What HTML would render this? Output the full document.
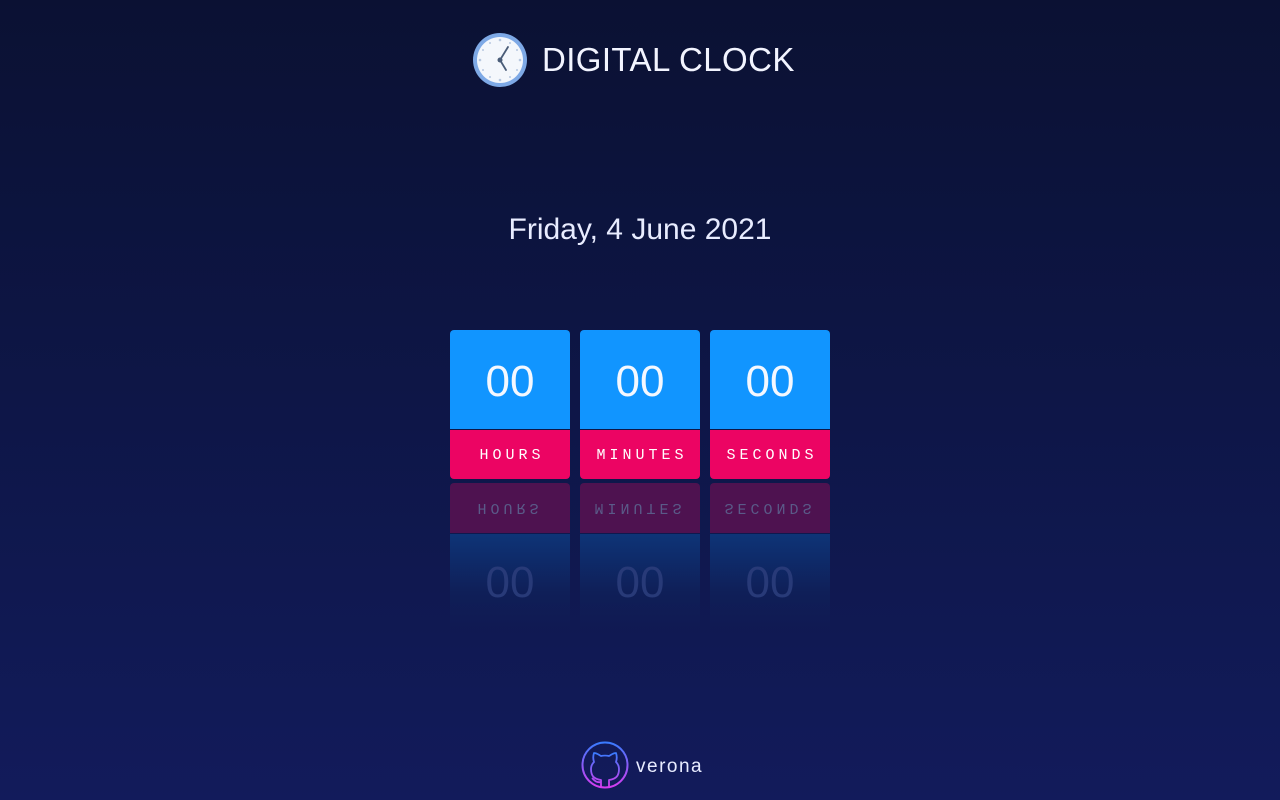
<!DOCTYPE html>
<html><head><style>
body{margin:0;width:1280px;height:800px;overflow:hidden;background:linear-gradient(#0b1133,#0d1543 40%,#121b5b);font-family:"Liberation Sans",sans-serif;color:#fff;position:relative}
.title{position:absolute;left:472px;top:32px;display:flex;align-items:center}
.title span{font-size:33px;margin-left:14px;letter-spacing:0.4px;color:#f2f4ff}
.date{position:absolute;top:213px;width:100%;text-align:center;font-size:30px;color:#e8ecff}
.card{position:absolute;top:330px;width:120px}
.num{height:99px;background:#1195ff;border-radius:4px 4px 0 0;text-align:center;line-height:104px;font-size:44px;color:#f4f8ff}
.lab{margin-top:1px;height:49px;background:#ec0463;border-radius:0 0 4px 4px;text-align:center;line-height:52px;font-family:"Liberation Mono",monospace;font-size:15px;letter-spacing:4px;padding-left:4px;box-sizing:border-box}
.ref{position:absolute;top:483px;width:120px}
.rlab{height:50px;background:#4e1250;border-radius:4px 4px 0 0;text-align:center;line-height:48px;font-family:"Liberation Mono",monospace;font-size:15px;letter-spacing:4px;color:#5a5a88}
.rlab div,.rnum div{transform:scaleY(-1)}
.rnum{margin-top:1px;height:97px;background:linear-gradient(#0e3477,#0f1f58 60%,rgba(16,26,85,0));text-align:center;line-height:95px;font-size:44px;color:#283a78}
.foot{position:absolute;left:581px;top:741px;display:flex;align-items:center}
.foot span{font-size:19px;margin-left:7px;color:#e8ecff;letter-spacing:1.5px;margin-top:4px}
</style></head><body>
<div class="title">
<svg width="56" height="56" viewBox="0 0 56 56"><circle cx="28" cy="28" r="27" fill="#7ea9e6"/><circle cx="28" cy="28" r="23" fill="#f4f7fc"/>
<g fill="#b8c8e0"><circle cx="28" cy="8" r="1.3"/><circle cx="28" cy="48" r="1.3"/><circle cx="8" cy="28" r="1.3"/><circle cx="48" cy="28" r="1.3"/><circle cx="38" cy="11" r="1"/><circle cx="45" cy="18" r="1"/><circle cx="45" cy="38" r="1"/><circle cx="38" cy="45" r="1"/><circle cx="18" cy="45" r="1"/><circle cx="11" cy="38" r="1"/><circle cx="11" cy="18" r="1"/><circle cx="18" cy="11" r="1"/></g>
<path d="M28 28 L36 15 M28 28 L34 38" stroke="#4a5c78" stroke-width="1.8" stroke-linecap="round"/><circle cx="28" cy="28" r="2.5" fill="#4a5c78"/></svg>
<span>DIGITAL CLOCK</span></div>
<div class="date">Friday, 4 June 2021</div>
<div class="card" style="left:450px"><div class="num">00</div><div class="lab">HOURS</div></div>
<div class="card" style="left:580px"><div class="num">00</div><div class="lab">MINUTES</div></div>
<div class="card" style="left:710px"><div class="num">00</div><div class="lab">SECONDS</div></div>
<div class="ref" style="left:450px"><div class="rlab"><div>HOURS</div></div><div class="rnum"><div>00</div></div></div>
<div class="ref" style="left:580px"><div class="rlab"><div>MINUTES</div></div><div class="rnum"><div>00</div></div></div>
<div class="ref" style="left:710px"><div class="rlab"><div>SECONDS</div></div><div class="rnum"><div>00</div></div></div>
<div class="foot">
<svg width="48" height="48" viewBox="0 0 48 48"><defs><linearGradient id="g" x1="0" y1="0" x2="0" y2="1"><stop offset="0" stop-color="#3a7bff"/><stop offset="1" stop-color="#d63cf0"/></linearGradient></defs>
<circle cx="24" cy="24" r="22.5" fill="none" stroke="url(#g)" stroke-width="2"/>
<path d="M20 46 V39 C13 38 10 35 10 28 C10 25 11 23 13 21 C12 18 12 15 13 12 C16 12 18 14 20 15 C22 14.5 26 14.5 28 15 C30 14 32 12 35 12 C36 15 36 18 35 21 C37 23 38 25 38 28 C38 35 35 38 28 39 V46 M20 41 C15 42 13 39 11 37" fill="none" stroke="url(#g)" stroke-width="1.8" stroke-linejoin="round"/></svg>
<span>verona</span></div>
</body></html>
